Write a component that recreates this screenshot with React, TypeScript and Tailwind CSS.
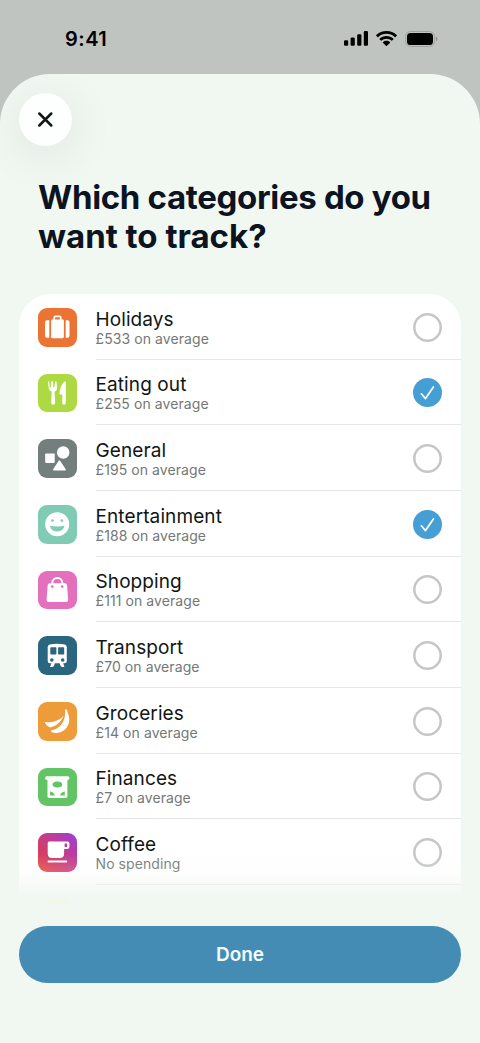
import clsx from "clsx"
import { ReactNode, useState } from "react"

interface Category {
  name: string
  detail: string
  tile: string
  icon: ReactNode
}

const categories: Category[] = [
  {
    name: "Holidays",
    detail: "£533 on average",
    tile: "bg-[#eb7434]",
    icon: (
      <>
        <path d="M11.3 12.2v17.6H9a2 2 0 0 1-2-2V14.2a2 2 0 0 1 2-2zM27.7 12.2v17.6h1.8a2 2 0 0 0 2-2V14.2a2 2 0 0 0-2-2z" />
        <rect x="13.1" y="11.4" width="12.8" height="18.8" rx="1.4" />
        <path
          d="M16.2 12V9.8a1.5 1.5 0 0 1 1.5-1.5h3.6a1.5 1.5 0 0 1 1.5 1.5V12"
          fill="none"
          stroke="white"
          strokeWidth="1.7"
        />
      </>
    ),
  },
  {
    name: "Eating out",
    detail: "£255 on average",
    tile: "bg-[#add943]",
    icon: (
      <>
        <path d="M9.8 7.6q.7-.8 1.4.1l.7 5.5h1l.3-5.7q1-.9 1.9 0l.3 5.7h1l.7-5.5q.7-.9 1.4-.1l.6 6.1c.1 2-1.1 3.2-2.5 3.9l.5 11.1a1.9 1.9 0 0 1-3.900 0l.5-11.100c-1.800-.7-3-1.900-2.900-3.900z" />
        <path d="M27.800 8v21a1.800 1.800 0 0 1-3.600 0l.2-8.500h-2c-.7 0-1-.4-.9-1 .3-5 2-9.500 5-12q1.300-.8 1.300.5z" />
      </>
    ),
  },
  {
    name: "General",
    detail: "£195 on average",
    tile: "bg-[#737f7c]",
    icon: (
      <>
        <rect x="7.2" y="14.4" width="9.5" height="9.6" rx="0.9" />
        <circle cx="25.2" cy="13.5" r="6.2" />
        <path d="M20.700 21.800q.7-1 1.400 0l5.600 8.400q.6 1.300-.8 1.300H16q-1.400 0-.8-1.300z" />
      </>
    ),
  },
  {
    name: "Entertainment",
    detail: "£188 on average",
    tile: "bg-[#80cbb4]",
    icon: (
      <>
        <circle cx="19.2" cy="19.2" r="12" />
        <g fill="#80cbb4">
          <circle cx="14.5" cy="15.6" r="1.35" />
          <circle cx="23.9" cy="15.6" r="1.35" />
          <path d="M12 20.800q7.200 1.300 14.400 0c-.6 3.700-3.500 5.700-7.200 5.700s-6.600-2-7.200-5.700z" />
        </g>
      </>
    ),
  },
  {
    name: "Shopping",
    detail: "£111 on average",
    tile: "bg-[#e36fbd]",
    icon: (
      <>
        <path d="M11.600 12.300h15.500q1.700 0 1.900 1.700l1.200 14.800q.1 2.200-2 2.200H10.600q-2.200 0-2-2.200L9.700 14q.2-1.700 1.900-1.700z" />
        <path
          d="M14.300 13v-1.200c0-2.700 2.100-4.800 5-4.800s5 2.100 5 4.800V13"
          fill="none"
          stroke="white"
          strokeWidth="1.9"
        />
        <circle cx="14.3" cy="15.6" r="1.3" fill="#e36fbd" />
        <circle cx="24.2" cy="15.6" r="1.3" fill="#e36fbd" />
      </>
    ),
  },
  {
    name: "Transport",
    detail: "£70 on average",
    tile: "bg-[#2a667f]",
    icon: (
      <>
        <path d="M11.600 8.600c4.700-1.200 10.600-1.200 15.300 0q1.900.6 1.900 2.600v13.900q0 2.200-2.200 2.200H11.900q-2.200 0-2.200-2.200V11.200q0-2 1.900-2.600z" />
        <path d="M13.500 26.500h3.600l-1 3.100q-.5 1.300-1.800 1.300h-2.200zM25 26.500h-3.600l1 3.100q.5 1.300 1.800 1.300h2.200z" />
        <g fill="#2a667f">
          <rect x="12.3" y="11.3" width="6.1" height="7.1" rx="0.7" />
          <rect x="20.1" y="11.3" width="6.1" height="7.1" rx="0.7" />
          <circle cx="13.8" cy="24" r="1.8" />
          <circle cx="24.7" cy="24" r="1.8" />
        </g>
      </>
    ),
  },
  {
    name: "Groceries",
    detail: "£14 on average",
    tile: "bg-[#ee9b3a]",
    icon: (
      <>
        <path d="M27.400 7.300l1.600.4c.1 2.600 2.300 5.500 2.300 9.800 0 8-6.300 13.500-13.200 13.500-2.500 0-4.700-.7-5.200-1.700-.2-.8.7-1 1.800-1.200 7-1.600 11.600-8 12.200-14.300.2-2.500-.2-4.500.5-6.500z" />
        <path d="M25.600 13.500c-3.100 4.700-10.800 7.500-17.500 6.400-1-.1-1.500.5-1 1.200 1.200 2.100 3 3.500 5.400 4.400 6.500-1.600 11.500-6.400 13.100-12z" />
        <path
          d="M13 25.900c5.500-1.400 9.800-4.700 12-9.200"
          fill="none"
          stroke="#ee9b3a"
          strokeWidth="1"
        />
      </>
    ),
  },
  {
    name: "Finances",
    detail: "£7 on average",
    tile: "bg-[#62c465]",
    icon: (
      <>
        <rect x="7.2" y="8.3" width="24.2" height="3.6" rx="1.7" />
        <path d="M9.500 10h19.900v18.200q0 1.800-1.800 1.800H11.300q-1.800 0-1.800-1.800z" />
        <g fill="#62c465">
          <ellipse cx="19.4" cy="16.4" rx="4.8" ry="3" />
          <path d="M12.100 23.500c2.600.2 4.400 1.700 4.700 4.100h-4.700zM26.800 23.500c-2.600.2-4.400 1.700-4.700 4.100h4.700z" />
        </g>
      </>
    ),
  },
  {
    name: "Coffee",
    detail: "No spending",
    tile: "bg-[linear-gradient(to_bottom_left,#993fd8_0%,#bd3c9c_35%,#d43d63_70%,#e8463f_100%)]",
    icon: (
      <>
        <path
          fillRule="evenodd"
          d="M11.200 8.400h18.400q1.800 0 1.800 1.800v3.900q0 1.800-1.800 1.800h-3.500v4.600q0 4.500-4.500 4.500h-7.400q-4.500 0-4.500-4.500V9.900q0-1.500 1.500-1.500zm15.400 2.700v2.500q0 .5.500.5h1.400q.6 0 .6-.6v-2.300q0-.6-.6-.6h-1.400q-.5 0-.5.500z"
        />
        <rect x="9.6" y="27.5" width="19.6" height="2.1" rx="0.8" />
      </>
    ),
  },
]

export default function App() {
  const [selected, setSelected] = useState(["Eating out", "Entertainment"])

  function toggle(name: string) {
    setSelected((current) =>
      current.includes(name)
        ? current.filter((item) => item !== name)
        : [...current, name],
    )
  }

  return (
    <div className="flex h-[1043px] w-[480px] flex-col overflow-hidden bg-[#c0c4c0] font-[Inter,'Liberation_Sans',sans-serif]">
      <StatusBar />

      <main className="flex min-h-0 grow flex-col overflow-hidden rounded-t-[50px] bg-[#f1f8f2] px-[19px] pt-[19px] pb-[60px]">
        <button
          aria-label="Close"
          className="flex size-[53px] shrink-0 items-center justify-center rounded-full bg-[#fcfffd] shadow-[0_8px_44px_8px_rgba(0,0,0,0.055)]"
        >
          <svg
            width="17"
            height="17"
            viewBox="0 0 17 17"
            className="mb-px"
          >
            <path
              d="M2.300 2.500l12 12M14.300 2.500l-12 12"
              stroke="#111715"
              strokeWidth="2.5"
              strokeLinecap="round"
            />
          </svg>
        </button>

        <h1 className="mt-8 shrink-0 pl-[19px] text-[33px] leading-[39px] font-bold text-[#0c1421]">
          <span className="block tracking-[-0.33px]">
            Which categories do you
          </span>
          <span className="block">want to track?</span>
        </h1>

        <div className="relative mt-[38px] h-[612px] shrink-0 overflow-hidden">
          <div className="rounded-t-[32px] bg-white">
            {categories.map((category) => (
              <CategoryRow
                key={category.name}
                category={category}
                checked={selected.includes(category.name)}
                onToggle={() => toggle(category.name)}
              />
            ))}
            <div className="h-10" />
          </div>

          {/* fades the list out above the button */}
          <div className="pointer-events-none absolute inset-x-0 bottom-0 h-[52px] bg-linear-to-b from-[#f1f8f2]/0 via-[#f1f8f2]/20 via-40% to-[#f1f8f2] to-80%" />
          <div className="absolute bottom-[3px] left-[28px] h-[3px] w-[22px] rounded-full bg-[#f3f6e2] blur-[1px]" />
        </div>

        <button className="mt-5 h-[57px] shrink-0 rounded-full bg-[#448cb3] pt-[2px] text-[19px] font-semibold text-[#f5fcff]">
          Done
        </button>
      </main>
    </div>
  )
}

interface CategoryRowProps {
  category: Category
  checked: boolean
  onToggle: () => void
}

function CategoryRow({ category, checked, onToggle }: CategoryRowProps) {
  return (
    <button
      role="checkbox"
      aria-checked={checked}
      onClick={onToggle}
      className="flex h-[65.66px] w-full items-center pl-[19px] text-left"
    >
      <span
        className={clsx(
          "mt-px size-[38.5px] shrink-0 overflow-hidden rounded-[9px]",
          category.tile,
        )}
      >
        <svg viewBox="0 0 38.5 38.5" fill="white" className="size-full">
          {category.icon}
        </svg>
      </span>

      <span className="ml-[19px] flex h-full grow items-center justify-between border-b border-[#e6e8e7] pt-[2px] pr-[19px]">
        <span className="flex flex-col pt-[2px]">
          <span className="text-[19px] leading-[21px] tracking-[0.1px] text-[#111514]">
            {category.name}
          </span>
          <span className="text-sm leading-[18px] tracking-[0.08px] text-[#747876]">
            {category.detail}
          </span>
        </span>

        <Check checked={checked} />
      </span>
    </button>
  )
}

function Check(props: { checked: boolean }) {
  return (
    <svg width="29" height="29" viewBox="0 0 29 29" fill="none">
      {props.checked ? (
        <>
          <circle cx="14.5" cy="14.5" r="14.5" fill="#459fd5" />
          <path
            d="M8.300 15.800l4.200 4.800 7.900-11.600"
            stroke="white"
            strokeWidth="1.7"
            strokeLinecap="round"
            strokeLinejoin="round"
          />
        </>
      ) : (
        <circle
          cx="14.5"
          cy="14.5"
          r="13.2"
          stroke="#c5c7c6"
          strokeWidth="2.5"
        />
      )}
    </svg>
  )
}

function StatusBar() {
  return (
    <header className="flex h-[74px] shrink-0 items-center justify-between pt-[3px] pr-[42px] pl-[65px] text-black">
      <span className="text-xl font-semibold tracking-[0.5px]">9:41</span>

      <div className="flex items-center gap-2">
        <svg width="24" height="15" viewBox="0 0 24 15">
          <rect x="0" y="9.3" width="4.2" height="5.5" rx="1.2" />
          <rect x="6.6" y="6.5" width="4.2" height="8.3" rx="1.2" />
          <rect x="13.2" y="3.2" width="4.2" height="11.6" rx="1.2" />
          <rect x="19.8" y="0" width="4.2" height="14.8" rx="1.2" />
        </svg>

        <svg width="21" height="15" viewBox="0 0 21 15">
          <path d="M10.500 0C6.500 0 2.900 1.500.3 4q-.4.400 0 .8l1.200 1.200q.4.400.8 0C4.500 3.900 7.300 2.800 10.500 2.800s6 1.100 8.200 3.200q.4.400.8 0l1.200-1.200q.4-.4 0-.8C18.100 1.500 14.500 0 10.500 0z" />
          <path d="M10.500 5C7.900 5 5.500 6 3.700 7.600q-.4.400 0 .8l1.200 1.200q.4.400.8 0c1.300-1.200 3-1.900 4.800-1.900s3.500.7 4.800 1.900q.4.400.8 0l1.200-1.200q.4-.4 0-.8C15.500 6 13.100 5 10.500 5z" />
          <path d="M10.500 9.800c-1.300 0-2.500.5-3.400 1.300q-.4.400 0 .8l2.900 2.900q.5.400 1 0l2.900-2.900q.4-.4 0-.8c-.9-.8-2.100-1.300-3.400-1.300z" />
        </svg>

        <svg width="33" height="16" viewBox="0 0 33 16">
          <rect
            x="0.5"
            y="0.5"
            width="29"
            height="15"
            rx="5"
            fill="none"
            stroke="#9fa4a0"
          />
          <rect x="2" y="2" width="26" height="12" rx="3.6" />
          <path d="M31 5.800c1.700.6 1.700 3.800 0 4.400z" fill="#858a86" />
        </svg>
      </div>
    </header>
  )
}
